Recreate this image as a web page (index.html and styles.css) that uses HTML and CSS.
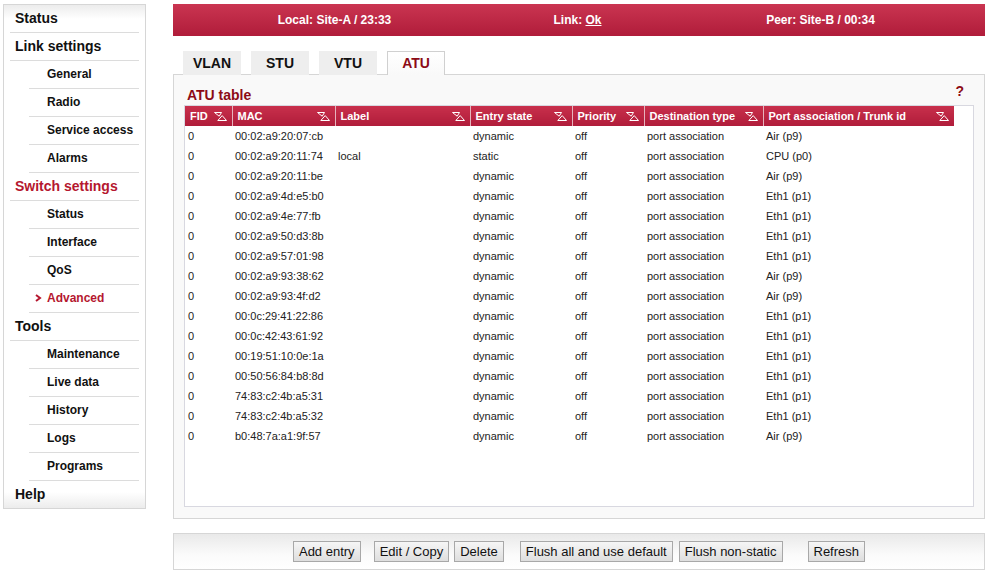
FILE: index.html
```html
<!DOCTYPE html>
<html>
<head>
<meta charset="utf-8">
<title>ATU table</title>
<link rel="stylesheet" href="styles.css">
</head>
<body>
<div class="page">
  <nav class="sidebar">
    <ul class="menu">
      <li class="top">Status</li>
      <li class="top">Link settings</li>
      <li class="sub">General</li>
      <li class="sub">Radio</li>
      <li class="sub">Service access</li>
      <li class="sub">Alarms</li>
      <li class="top active">Switch settings</li>
      <li class="sub">Status</li>
      <li class="sub">Interface</li>
      <li class="sub">QoS</li>
      <li class="sub active"><svg class="chev" width="7" height="8" viewBox="0 0 7 8"><polyline points="1,1 5,4 1,7" fill="none" stroke="#b5172f" stroke-width="2"/></svg>Advanced</li>
      <li class="top">Tools</li>
      <li class="sub">Maintenance</li>
      <li class="sub">Live data</li>
      <li class="sub">History</li>
      <li class="sub">Logs</li>
      <li class="sub">Programs</li>
      <li class="top last">Help</li>
    </ul>
  </nav>
  <main class="main">
    <header class="topbar">
      <span>Local: Site-A / 23:33</span>
      <span>Link: <u>Ok</u></span>
      <span>Peer: Site-B / 00:34</span>
    </header>
    <div class="tabs">
      <span class="tab">VLAN</span>
      <span class="tab">STU</span>
      <span class="tab">VTU</span>
      <span class="tab current">ATU</span>
    </div>
    <section class="panel">
      <div class="panel-head">
        <h2 class="title">ATU table</h2>
        <span class="help">?</span>
      </div>
      <div class="tablebox">
        <table class="atu">
          <colgroup>
            <col class="c-fid"><col class="c-mac"><col class="c-label"><col class="c-state"><col class="c-prio"><col class="c-dest"><col class="c-port">
          </colgroup>
          <thead>
            <tr>
              <th><div class="th"><span>FID</span><svg class="sort" width="13" height="9" viewBox="0 0 13 9"><path d="M0.5 0.5H7.5L5.2 4.2Z M3.8 8.5H12.5L8.2 3.6Z" fill="none" stroke="#fff" stroke-width="1"/></svg></div></th>
              <th><div class="th"><span>MAC</span><svg class="sort" width="13" height="9" viewBox="0 0 13 9"><path d="M0.5 0.5H7.5L5.2 4.2Z M3.8 8.5H12.5L8.2 3.6Z" fill="none" stroke="#fff" stroke-width="1"/></svg></div></th>
              <th><div class="th"><span>Label</span><svg class="sort" width="13" height="9" viewBox="0 0 13 9"><path d="M0.5 0.5H7.5L5.2 4.2Z M3.8 8.5H12.5L8.2 3.6Z" fill="none" stroke="#fff" stroke-width="1"/></svg></div></th>
              <th><div class="th"><span>Entry state</span><svg class="sort" width="13" height="9" viewBox="0 0 13 9"><path d="M0.5 0.5H7.5L5.2 4.2Z M3.8 8.5H12.5L8.2 3.6Z" fill="none" stroke="#fff" stroke-width="1"/></svg></div></th>
              <th><div class="th"><span>Priority</span><svg class="sort" width="13" height="9" viewBox="0 0 13 9"><path d="M0.5 0.5H7.5L5.2 4.2Z M3.8 8.5H12.5L8.2 3.6Z" fill="none" stroke="#fff" stroke-width="1"/></svg></div></th>
              <th><div class="th"><span>Destination type</span><svg class="sort" width="13" height="9" viewBox="0 0 13 9"><path d="M0.5 0.5H7.5L5.2 4.2Z M3.8 8.5H12.5L8.2 3.6Z" fill="none" stroke="#fff" stroke-width="1"/></svg></div></th>
              <th class="lastcol"><div class="th"><span>Port association / Trunk id</span><svg class="sort" width="13" height="9" viewBox="0 0 13 9"><path d="M0.5 0.5H7.5L5.2 4.2Z M3.8 8.5H12.5L8.2 3.6Z" fill="none" stroke="#fff" stroke-width="1"/></svg></div></th>
            </tr>
          </thead>
          <tbody>
            <tr><td>0</td><td>00:02:a9:20:07:cb</td><td></td><td>dynamic</td><td>off</td><td>port association</td><td>Air (p9)</td></tr>
            <tr><td>0</td><td>00:02:a9:20:11:74</td><td>local</td><td>static</td><td>off</td><td>port association</td><td>CPU (p0)</td></tr>
            <tr><td>0</td><td>00:02:a9:20:11:be</td><td></td><td>dynamic</td><td>off</td><td>port association</td><td>Air (p9)</td></tr>
            <tr><td>0</td><td>00:02:a9:4d:e5:b0</td><td></td><td>dynamic</td><td>off</td><td>port association</td><td>Eth1 (p1)</td></tr>
            <tr><td>0</td><td>00:02:a9:4e:77:fb</td><td></td><td>dynamic</td><td>off</td><td>port association</td><td>Eth1 (p1)</td></tr>
            <tr><td>0</td><td>00:02:a9:50:d3:8b</td><td></td><td>dynamic</td><td>off</td><td>port association</td><td>Eth1 (p1)</td></tr>
            <tr><td>0</td><td>00:02:a9:57:01:98</td><td></td><td>dynamic</td><td>off</td><td>port association</td><td>Eth1 (p1)</td></tr>
            <tr><td>0</td><td>00:02:a9:93:38:62</td><td></td><td>dynamic</td><td>off</td><td>port association</td><td>Air (p9)</td></tr>
            <tr><td>0</td><td>00:02:a9:93:4f:d2</td><td></td><td>dynamic</td><td>off</td><td>port association</td><td>Air (p9)</td></tr>
            <tr><td>0</td><td>00:0c:29:41:22:86</td><td></td><td>dynamic</td><td>off</td><td>port association</td><td>Eth1 (p1)</td></tr>
            <tr><td>0</td><td>00:0c:42:43:61:92</td><td></td><td>dynamic</td><td>off</td><td>port association</td><td>Eth1 (p1)</td></tr>
            <tr><td>0</td><td>00:19:51:10:0e:1a</td><td></td><td>dynamic</td><td>off</td><td>port association</td><td>Eth1 (p1)</td></tr>
            <tr><td>0</td><td>00:50:56:84:b8:8d</td><td></td><td>dynamic</td><td>off</td><td>port association</td><td>Eth1 (p1)</td></tr>
            <tr><td>0</td><td>74:83:c2:4b:a5:31</td><td></td><td>dynamic</td><td>off</td><td>port association</td><td>Eth1 (p1)</td></tr>
            <tr><td>0</td><td>74:83:c2:4b:a5:32</td><td></td><td>dynamic</td><td>off</td><td>port association</td><td>Eth1 (p1)</td></tr>
            <tr><td>0</td><td>b0:48:7a:a1:9f:57</td><td></td><td>dynamic</td><td>off</td><td>port association</td><td>Air (p9)</td></tr>
          </tbody>
        </table>
      </div>
    </section>
    <div class="buttonbar">
      <button class="btn">Add entry</button>
      <button class="btn gap-13">Edit / Copy</button>
      <button class="btn gap-5">Delete</button>
      <button class="btn gap-16">Flush all and use default</button>
      <button class="btn gap-6">Flush non-static</button>
      <button class="btn gap-last">Refresh</button>
    </div>
  </main>
</div>
</body>
</html>
```
FILE: styles.css
```css
* { box-sizing: border-box; }
html, body { margin: 0; padding: 0; background: #fff; }
body {
  font-family: "Liberation Sans", Arial, sans-serif;
  color: #111;
  padding: 4px 0 0 3px;
}
.page { display: flex; align-items: flex-start; }

/* sidebar */
.sidebar {
  width: 143px;
  border: 1px solid #d6d6d6;
  padding: 0 6px;
  background: linear-gradient(#ececec, #fff 14px, #fff calc(100% - 16px), #ececec);
  flex-shrink: 0;
}
.menu { list-style: none; margin: 0; padding: 0; }
.menu li {
  height: 28px;
  border-bottom: 1px solid #dcdcdc;
  display: flex;
  align-items: center;
  font-weight: bold;
  color: #111;
  white-space: nowrap;
  padding-bottom: 1px;
}
.menu li.top { font-size: 14px; padding-left: 5px; }
.menu li.sub { font-size: 12px; margin-left: 19px; padding-left: 18px; }
.menu li.last { border-bottom: none; height: 27px; }
.menu li.active { color: #b5172f; }
.menu li .chev { margin-left: -12px; margin-right: 5px; }

/* main */
.main { width: 812px; margin-left: 27px; }
.topbar {
  height: 32px;
  background: linear-gradient(#ca3551, #b01c3a);
  color: #fff;
  font-weight: bold;
  font-size: 12px;
  display: grid;
  grid-template-columns: repeat(3, 243px);
  padding-left: 40px;
  align-items: center;
  justify-items: center;
}
.topbar u { text-decoration: underline; }

.tabs {
  display: flex;
  gap: 10px;
  margin-top: 15px;
  padding-left: 10px;
  height: 24px;
  margin-bottom: -1px;
  position: relative;
  z-index: 1;
}
.tab {
  width: 58px;
  height: 24px;
  background: #eeeeee;
  font-size: 14px;
  font-weight: bold;
  display: flex;
  align-items: center;
  justify-content: center;
  padding-bottom: 1px;
  color: #111;
}
.tab.current {
  width: 58px;
  background: linear-gradient(#ffffff, #f9f9f9);
  border: 1px solid #d0d0d0;
  border-bottom: none;
  color: #8c0b16;
}

.panel {
  border: 1px solid #d6d6d6;
  background: #f9f9f9;
  padding: 0 10px 11px;
}
.panel-head {
  height: 30px;
  display: flex;
  justify-content: space-between;
  align-items: flex-end;
}
.title {
  margin: 0 0 2px 3px;
  font-size: 14px;
  font-weight: bold;
  color: #8c0b16;
  line-height: 16px;
}
.help {
  font-size: 14px;
  font-weight: bold;
  color: #8c0b16;
  margin: 0 10px 6px 0;
  line-height: 16px;
}
.tablebox {
  height: 402px;
  border: 1px solid #d8d8e0;
  background: #fff;
}
.atu {
  border-collapse: collapse;
  table-layout: fixed;
  width: 769px;
  font-size: 11px;
}
.c-fid { width: 47px; }
.c-mac { width: 103px; }
.c-label { width: 135px; }
.c-state { width: 102px; }
.c-prio { width: 72px; }
.c-dest { width: 119px; }
.c-port { width: 191px; }
.atu th {
  height: 20px;
  padding: 0 5px 0 5px;
  background: linear-gradient(#c8304c, #b01c3a);
  color: #fff;
  font-weight: bold;
  text-align: left;
  border-right: 1px solid #e6b3bd;
}
.atu th.lastcol { border-right: none; }
.th {
  display: flex;
  justify-content: space-between;
  align-items: center;
  white-space: nowrap;
}
.sort { display: block; flex-shrink: 0; }
.atu td {
  height: 20px;
  padding: 0 0 0 3px;
  color: #222;
  white-space: nowrap;
}

.buttonbar {
  margin-top: 14px;
  height: 37px;
  border: 1px solid #d6d6d6;
  background: linear-gradient(#e9e9e9, #fbfbfb 60%, #fff);
  display: flex;
  justify-content: center;
  align-items: flex-start;
  padding-top: 7px;
}
.btn {
  font-family: "Liberation Sans", Arial, sans-serif;
  font-size: 13px;
  height: 21px;
  padding: 0 5px;
  border: 1px solid #a8a8a8;
  background: linear-gradient(#f6f6f6, #dedede);
  color: #111;
  line-height: 19px;
}
.gap-13 { margin-left: 13px; }
.gap-5 { margin-left: 5px; }
.gap-16 { margin-left: 16px; }
.gap-6 { margin-left: 6px; }
.gap-last { margin-left: 25px; }
```
